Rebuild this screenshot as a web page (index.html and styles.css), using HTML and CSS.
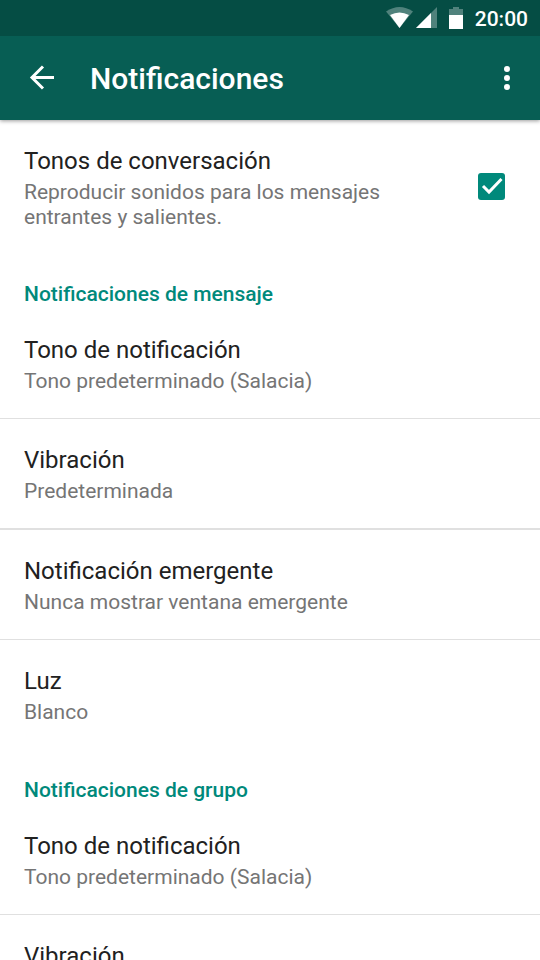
FILE: index.html
```
<!DOCTYPE html>
<html lang="es">
<head>
<meta charset="utf-8">
<meta name="viewport" content="width=device-width, initial-scale=1">
<title>Notificaciones</title>
<link rel="stylesheet" href="styles.css">
</head>
<body>
<header class="top">
  <div class="status">
    <svg class="status-icons" width="80" height="24" viewBox="0 0 80 24" aria-hidden="true">
      <path class="dim" d="M0 5.500Q13.500-3.500 27 5.500L13.500 22Z"/>
      <path class="lit" d="M4 9Q13.500 4 23 9L13.500 22Z"/>
      <path class="dim" d="M51 1V22H30Z"/>
      <path class="lit" d="M45 7V22H30Z"/>
      <path class="dim" d="M67 1h6v2h4v7H63V3h4z"/>
      <path class="lit" d="M63 9h14v14H63z"/>
    </svg>
    <time class="clock">20:00</time>
  </div>
  <div class="bar">
    <button class="icon-button" type="button" aria-label="Atrás">
      <svg width="36" height="36" viewBox="0 0 36 36" aria-hidden="true"><path class="arrow" d="M30 17.500H8M19 6.500L8 17.500L19 28.500"/></svg>
    </button>
    <h1 class="title">Notificaciones</h1>
    <button class="icon-button" type="button" aria-label="Más opciones">
      <svg width="36" height="36" viewBox="0 0 36 36" aria-hidden="true"><circle class="lit" cx="18" cy="9" r="3"/><circle class="lit" cx="18" cy="18" r="3"/><circle class="lit" cx="18" cy="27" r="3"/></svg>
    </button>
  </div>
</header>
<main>
  <label class="row check-row">
    <span class="text">
      <span class="name">Tonos de conversación</span>
      <span class="value">Reproducir sonidos para los mensajes entrantes y salientes.</span>
    </span>
    <span class="tick">
      <input class="tick-input" type="checkbox" checked>
      <svg class="tick-mark" viewBox="0 0 27 27" aria-hidden="true"><path d="M5 13L11 19L23.500 6"/></svg>
    </span>
  </label>
  <section>
    <h2 class="heading">Notificaciones de mensaje</h2>
    <button class="row" type="button"><span class="name">Tono de notificación</span><span class="value">Tono predeterminado (Salacia)</span></button>
    <hr class="line">
    <button class="row" type="button"><span class="name">Vibración</span><span class="value">Predeterminada</span></button>
    <hr class="line thick">
    <button class="row" type="button"><span class="name">Notificación emergente</span><span class="value">Nunca mostrar ventana emergente</span></button>
    <hr class="line">
    <button class="row" type="button"><span class="name">Luz</span><span class="value">Blanco</span></button>
  </section>
  <section>
    <h2 class="heading">Notificaciones de grupo</h2>
    <button class="row" type="button"><span class="name">Tono de notificación</span><span class="value">Tono predeterminado (Salacia)</span></button>
    <hr class="line">
    <button class="row" type="button"><span class="name">Vibración</span><span class="value">Predeterminada</span></button>
  </section>
</main>
</body>
</html>
```
FILE: styles.css
```
* {
  box-sizing: border-box;
}

body {
  margin: 0;
  height: 100vh;
  display: flex;
  flex-direction: column;
  overflow: hidden;
  background: #fff;
  color: #212121;
  font-family: Roboto, "Noto Sans", sans-serif;
}

button {
  border: 0;
  background: none;
  color: inherit;
  font: inherit;
}

.top {
  flex: none;
  background: #075e54;
  color: #fff;
  box-shadow: 0 1px 4px rgba(0, 0, 0, 0.4);
}

.status {
  display: flex;
  justify-content: flex-end;
  align-items: center;
  gap: 9px;
  height: 36px;
  padding: 0 12px 0 0;
  background: #054d44;
}

.dim {
  fill: #50827c;
}

.lit {
  fill: #fff;
}

.clock {
  padding-top: 2px;
  font-size: 21px;
  font-weight: 500;
  line-height: 36px;
}

.bar {
  display: flex;
  align-items: center;
  height: 84px;
  padding: 0 15px 0 24px;
}

.icon-button {
  display: flex;
  padding: 0;
}

.arrow {
  fill: none;
  stroke: #fff;
  stroke-width: 3;
}

.title {
  flex: 1;
  margin: 0 0 0 30px;
  padding-top: 2px;
  font-size: 30px;
  font-weight: 500;
  line-height: 36px;
}

main {
  flex: 1;
  min-height: 0;
  overflow: hidden;
}

.row {
  display: block;
  width: 100%;
  padding: 26px 24px 24px;
  text-align: left;
}

.name,
.value {
  display: block;
}

.name {
  margin-bottom: 4px;
  font-size: 24px;
  line-height: 30px;
}

.value {
  color: #757575;
  font-size: 21px;
  line-height: 25px;
}

.check-row {
  display: flex;
  align-items: center;
  justify-content: space-between;
  gap: 72px;
  padding: 0 35px 0 24px;
}

.text {
  padding: 26px 0 23px;
}

.tick {
  display: grid;
  flex: none;
}

.tick-input,
.tick-mark {
  grid-area: 1 / 1;
  width: 27px;
  height: 27px;
  margin: 0;
}

.tick-input {
  appearance: none;
  border-radius: 3px;
  background: #00897b;
}

.tick-mark {
  visibility: hidden;
  pointer-events: none;
  fill: none;
  stroke: #fff;
  stroke-width: 3;
}

.tick-input:checked + .tick-mark {
  visibility: visible;
}

.heading {
  margin: 0;
  padding: 29px 24px 2px;
  color: #00897b;
  font-size: 21px;
  font-weight: 500;
  line-height: 25px;
}

.line {
  height: 1px;
  margin: 0;
  border: 0;
  background: #e0e0e0;
}

.thick {
  height: 2px;
}
```
